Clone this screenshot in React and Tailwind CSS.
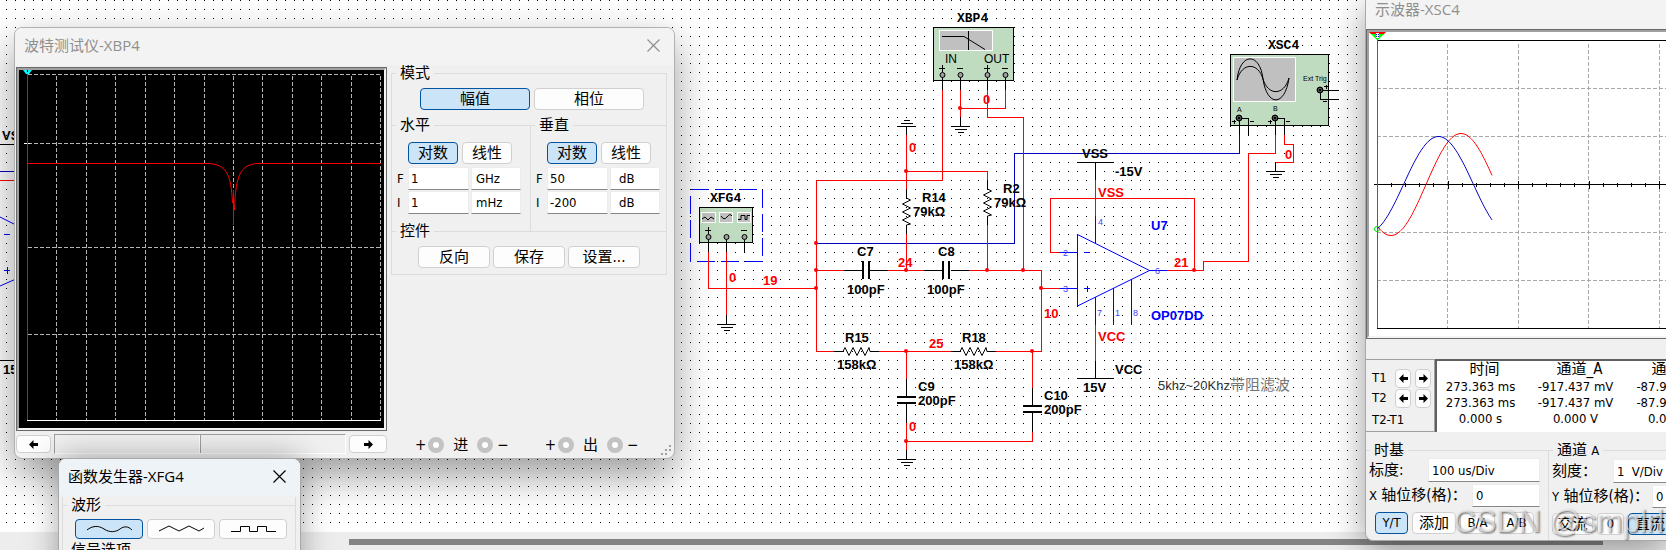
import React, { useState } from 'react';

const UI_FONT = "font-['DejaVu_Sans_Condensed','Noto_Sans','Noto_Sans_CJK_SC',sans-serif]";
const TITLE_FONT = "font-['Open_Sans','Noto_Sans_CJK_SC',sans-serif]";

const RED = '#ff0000';
const BLUE = '#0000ff';
const NAVY = '#0000c0';
const BLACK = '#000000';

/* ---------- shared controls ---------- */

function Btn({ active, className = '', children, ...rest }) {
  const look = active
    ? 'border-[#00549f] bg-[#cce4f7]'
    : 'border-[#d0d0d0] bg-[#fdfdfd]';
  return (
    <button
      type="button"
      className={`flex shrink-0 items-center justify-center rounded border text-black ${look} ${className}`}
      {...rest}
    >
      {children}
    </button>
  );
}

function Field({ className = '', ...rest }) {
  return (
    <input
      type="text"
      className={`min-w-0 shrink-0 border border-[#ececec] border-b-[#868686] bg-white text-[13px] text-black outline-none ${className}`}
      {...rest}
    />
  );
}

function Group({ legend, className = '', children }) {
  return (
    <fieldset className={`min-w-0 border-t border-[#dcdcdc] ${className}`}>
      <legend className="ml-1 px-1 text-[15px] leading-4">{legend}</legend>
      {children}
    </fieldset>
  );
}

function ArrowIcon({ right }) {
  return (
    <svg width="9" height="9" viewBox="0 0 9 9" aria-hidden="true">
      <path
        d={right ? 'M9 4.5 4.5 0v3H0v3h4.5v3z' : 'M0 4.5 4.5 0v3H9v3H4.5v3z'}
        fill="#000"
      />
    </svg>
  );
}

function CloseIcon() {
  return (
    <svg width="13" height="13" viewBox="0 0 13 13" aria-hidden="true">
      <path d="M.5.5l12 12M12.5.5l-12 12" stroke="currentColor" strokeWidth="1.2" />
    </svg>
  );
}

/* ---------- schematic ---------- */

function Wire({ d, c = RED, w = 1 }) {
  return <path d={d} fill="none" stroke={c} strokeWidth={w} shapeRendering="crispEdges" />;
}

function Label({ x, y, c = BLACK, children }) {
  return (
    <text x={x} y={y} fill={c} className="font-['Liberation_Sans',sans-serif] text-[13px] font-bold">
      {children}
    </text>
  );
}

function Name({ x, y, children }) {
  return (
    <text x={x} y={y} className="font-['Liberation_Mono',monospace] text-[13px] font-bold">
      {children}
    </text>
  );
}

function PinNo({ x, y, children }) {
  return (
    <text x={x} y={y} fill="#4040ff" className="font-['Liberation_Sans',sans-serif] text-[9px]">
      {children}
    </text>
  );
}

function Ground({ x, y, up }) {
  const s = up ? -1 : 1;
  return (
    <Wire
      c={BLACK}
      d={`M${x - 9} ${y}h18M${x - 6} ${y + 3 * s}h12M${x - 3} ${y + 6 * s}h6`}
    />
  );
}

function ResistorV({ x, y }) {
  return (
    <path
      d={`M${x} ${y - 9}v9l4 2-8 4 8 4-8 4 8 4-8 4 8 4-4 1v9`}
      fill="none"
      stroke="#000"
    />
  );
}

function ResistorH({ x, y }) {
  return (
    <path
      d={`M${x - 9} ${y}h9l2-4 4 8 4-8 4 8 4-8 4 8 4-8 1 4h9`}
      fill="none"
      stroke="#000"
    />
  );
}

function Pin({ x, y, cross }) {
  return (
    <g>
      <circle cx={x} cy={y} r="2.5" fill="#a0a0a0" stroke="#000" />
      {cross && <circle cx={x} cy={y} r="3" fill="none" stroke="#000" />}
      {cross && <circle cx={x} cy={y} r="1.5" fill="#000" />}
    </g>
  );
}

const NODES = [
  [960, 108], [906, 171], [816, 243], [816, 270], [816, 288], [906, 270],
  [987, 270], [1023, 270], [906, 351], [1032, 351], [1041, 288], [906, 441], [1194, 270],
];

function Schematic() {
  return (
    <svg className="block h-full w-full" aria-label="schematic">
      <defs>
        <pattern id="dots" width="9" height="9" patternUnits="userSpaceOnUse">
          <rect x="6" y="0" width="1" height="1" fill="#000" />
        </pattern>
      </defs>
      <rect width="100%" height="524" fill="url(#dots)" shapeRendering="crispEdges" />

      {/* neighbouring circuit on the left edge */}
      <Label x={2} y={140}>VSS</Label>
      <Label x={3} y={374}>15V</Label>
      <Wire c={BLACK} d="M0 144.5H16M0 360.5H16" />
      <Wire c={NAVY} d="M0 171.5H16" />
      <Wire d="M0 180.5H16" />
      <Wire c={BLUE} d="M4 234.5h6M4 270.5h6M7.5 267v7" />
      <path d="M0 217l16 8M0 286l16-7" stroke={BLUE} fill="none" />

      {/* instruments */}
      <Name x={957} y={22}>XBP4</Name>
      <rect x="933.5" y="27.5" width="80" height="53" fill="#c0dcc0" stroke="#000" />
      <rect x="939.5" y="30.5" width="53" height="20" fill="#c0c0c0" stroke="#fff" />
      <path d="M942 36.5h22l21 13M968.5 31v19" fill="none" stroke="#000" />
      <text x="945" y="63" className="font-['Liberation_Sans',sans-serif] text-[12px]">IN</text>
      <text x="984" y="63" className="font-['Liberation_Sans',sans-serif] text-[12px]">OUT</text>
      <Wire c={BLACK} d="M939 68.5h6M942.5 65v7M957 68.5h6M984 68.5h6M987.5 65v7M1002 68.5h6" />
      <Wire c={BLACK} d="M942.5 75v15M960.5 75v15M987.5 75v15M1005.5 75v15" />
      <Pin x={942.5} y={75} />
      <Pin x={960.5} y={75} />
      <Pin x={987.5} y={75} />
      <Pin x={1005.5} y={75} />

      <rect
        x="690.5" y="189.5" width="72" height="72"
        fill="none" stroke={BLUE} strokeDasharray="18 6" shapeRendering="crispEdges"
      />
      <Name x={710} y={202}>XFG4</Name>
      <rect x="699.5" y="207.5" width="53" height="35" fill="#c0dcc0" stroke="#000" />
      <g fill="#c0c0c0" stroke="#fff">
        <rect x="701.5" y="212.5" width="14" height="10" />
        <rect x="719.5" y="212.5" width="13" height="10" />
        <rect x="737.5" y="212.5" width="13" height="10" />
      </g>
      <path
        d="M702 219l3-2 3 3 3-3 3 2M721 216q3 5 6 1t5-1M738 219.5h3v-4h4v4h2v-4h3"
        fill="none" stroke="#000"
      />
      <Wire c={BLACK} d="M705 230.5h6M708.5 227v7M741 230.5h6" />
      <Wire c={BLACK} d="M708.5 237v15M726.5 237v15M744.5 237v15" />
      <Pin x={708.5} y={237} />
      <Pin x={726.5} y={237} />
      <Pin x={744.5} y={237} />

      <Name x={1268} y={49}>XSC4</Name>
      <rect x="1230.5" y="54.5" width="98" height="71" fill="#c0dcc0" stroke="#000" />
      <rect x="1233.5" y="57.5" width="62" height="44" fill="#c0c0c0" stroke="#fff" />
      <path
        d="M1237 80C1240 52 1260 52 1263 79C1267 107 1285 107 1289 78M1237 80C1242 62 1258 62 1263 79C1268 96 1284 96 1289 78"
        fill="none" stroke="#000"
      />
      <g className="font-['Liberation_Sans',sans-serif] text-[7px]">
        <text x="1303" y="81">Ext Trig</text>
        <text x="1237" y="112">A</text>
        <text x="1273" y="111">B</text>
      </g>
      <Wire c={BLACK} d="M1320.5 90.5H1339M1320.5 90v9.5H1339M1324 86.5h4M1326.5 85v4M1323 101.5h4" />
      <Wire c={BLACK} d="M1239.5 118v17M1239 118.5h9.5V135M1275.5 118v17M1275 118.5h9.5V135" />
      <Wire c={BLACK} d="M1232 121.5h4M1234.5 120v4M1250 121.5h4M1268 121.5h4M1270.5 120v4M1286 121.5h4" />
      <Pin x={1320} y={90} cross />
      <Pin x={1239} y={118} cross />
      <Pin x={1275} y={118} cross />

      {/* op amp */}
      <path d="M1077.5 234.5L1149.5 270.5L1077.5 306z" fill="none" stroke={BLUE} />
      <Wire c={BLUE} d="M1059 252.5h18M1059 288.5h18M1149 270.5h18M1095.5 216v27M1095.5 297v28M1113.5 288v37M1131.5 279v46" />
      <Wire c={BLUE} d="M1084 252.5h6M1084 288.5h6M1087.5 286v6" />
      <PinNo x={1063} y={256}>2</PinNo>
      <PinNo x={1063} y={292}>3</PinNo>
      <PinNo x={1155} y={274}>6</PinNo>
      <PinNo x={1098} y={225}>4</PinNo>
      <PinNo x={1097} y={316}>7</PinNo>
      <PinNo x={1115} y={316}>1</PinNo>
      <PinNo x={1133} y={316}>8</PinNo>
      <Label x={1151} y={230} c={BLUE}>U7</Label>
      <Label x={1151} y={320} c={BLUE}>OP07DD</Label>

      {/* nets */}
      <Wire c={NAVY} d="M816 243.5H1014.5V153.5H1239.5V135" />
      <Wire d="M942.5 90V180.5H816.5V351.5H835" />
      <Wire d="M960.5 90V117M960 108.5H1005.5V90M987.5 90V117.5H1023.5V270" />
      <Wire d="M906.5 135V190M906 171.5H987.5V181M906.5 233V270M987.5 224V270" />
      <Wire d="M708.5 252V288.5H816M726.5 252V315" />
      <Wire d="M816 270.5H844M888 270.5H924M969 270.5H1041.5V351.5H996M1041 288.5H1060" />
      <Wire d="M879 351.5H952M906.5 351V379M906.5 423V450M906 441.5H1032.5V432M1032.5 351V388" />
      <Wire d="M1059 252.5H1050.5V198.5H1194.5V270M1167 270.5H1203.5V261.5H1248.5V153.5H1275.5V135" />
      <Wire d="M1095.5 180V216M1095.5 325V361M1284.5 135V144.5H1293.5V162.5H1275" />
      <Wire c={BLACK} d="M960.5 117V126M906.5 126V135M726.5 315V324M906.5 450V459M1275.5 162V171" />
      <Wire c={BLACK} d="M844 270.5h18M870 270.5h18M924 270.5h18M951 270.5h18" />
      <Wire c={BLACK} d="M906.5 379v18M906.5 404v19M1032.5 388v18M1032.5 413v19" />
      <Wire c={BLACK} d="M1077 162.5h37M1095.5 162v18M1077 378.5h37M1095.5 361v17" />
      <Wire c={BLACK} w={2} d="M863 261v18M869 261v18M943 261v18M949 261v18" />
      <Wire c={BLACK} w={2} d="M897 397h19M897 403h19M1023 406h19M1023 412h19" />

      <Ground x={960.5} y={126.5} />
      <Ground x={906.5} y={126.5} up />
      <Ground x={726.5} y={324.5} />
      <Ground x={906.5} y={459.5} />
      <Ground x={1275.5} y={171.5} />

      <ResistorV x={906.5} y={198} />
      <ResistorV x={987.5} y={189} />
      <ResistorH x={843} y={351.5} />
      <ResistorH x={960} y={351.5} />

      {NODES.map(([x, y]) => (
        <circle key={`${x}-${y}`} cx={x} cy={y} r="2" fill={RED} />
      ))}

      <Label x={983} y={104} c={RED}>0</Label>
      <Label x={909} y={152} c={RED}>0</Label>
      <Label x={729} y={282} c={RED}>0</Label>
      <Label x={909} y={431} c={RED}>0</Label>
      <Label x={1285} y={159} c={RED}>0</Label>
      <Label x={763} y={285} c={RED}>19</Label>
      <Label x={898} y={267} c={RED}>24</Label>
      <Label x={929} y={348} c={RED}>25</Label>
      <Label x={1044} y={318} c={RED}>10</Label>
      <Label x={1174} y={267} c={RED}>21</Label>
      <Label x={1098} y={197} c={RED}>VSS</Label>
      <Label x={1098} y={341} c={RED}>VCC</Label>

      <Label x={922} y={202}>R14</Label>
      <Label x={913} y={216}>79kΩ</Label>
      <Label x={1003} y={193}>R2</Label>
      <Label x={994} y={207}>79kΩ</Label>
      <Label x={857} y={256}>C7</Label>
      <Label x={847} y={294}>100pF</Label>
      <Label x={938} y={256}>C8</Label>
      <Label x={927} y={294}>100pF</Label>
      <Label x={845} y={342}>R15</Label>
      <Label x={837} y={369}>158kΩ</Label>
      <Label x={962} y={342}>R18</Label>
      <Label x={954} y={369}>158kΩ</Label>
      <Label x={918} y={391}>C9</Label>
      <Label x={918} y={405}>200pF</Label>
      <Label x={1044} y={400}>C10</Label>
      <Label x={1044} y={414}>200pF</Label>
      <Label x={1082} y={158}>VSS</Label>
      <Label x={1115} y={176}>-15V</Label>
      <Label x={1115} y={374}>VCC</Label>
      <Label x={1083} y={392}>15V</Label>
      <text x="1158" y="390" fill="#333" className="font-['Liberation_Sans','Noto_Sans_CJK_SC',sans-serif] text-[13px]">
        5khz~20Khz
        <tspan fill="#777" className="text-[15px]">带阻滤波</tspan>
      </text>
    </svg>
  );
}

/* ---------- bode plotter ---------- */

const BODE_X = [56.5, 86.5, 115.5, 145.5, 174.5, 204.5, 233.5, 262.5, 292.5, 321.5, 351.5, 380.5];
const BODE_Y = [74.5, 143.5, 247.5, 334.5];

function BodePlot() {
  return (
    <svg viewBox="19 70 365 358" className="block h-[358px] w-full bg-black" aria-label="bode plot">
      <g stroke="#b4b4b4" strokeDasharray="4 2" shapeRendering="crispEdges">
        {BODE_X.map((x) => <path key={x} d={`M${x} 76V420`} />)}
        {BODE_Y.map((y) => <path key={y} d={`M28 ${y}H381`} />)}
      </g>
      <path d="M27 420.5H381M24 143.5h6" stroke="#fff" shapeRendering="crispEdges" />
      <path d="M27.5 74V420M27 163.5H209M257 163.5H381" stroke={RED} shapeRendering="crispEdges" />
      <path
        d="M209 163.5C226 165 231 173 232.5 203M233.5 190V225M234.5 210C235.5 174 241 165 257 163.5"
        fill="none" stroke={RED}
      />
      <path d="M23 70h9l-3 4h-3z" fill="#00ffff" />
      <path d="M27 70h1v2h-1z" fill="#000" />
    </svg>
  );
}

function AxisRow({ tag, value, unit, unitPad = 'pl-1' }) {
  return (
    <div className="flex h-6 items-start">
      <span className="w-[11px] shrink-0 pt-1 text-[13px] leading-4">{tag}</span>
      <Field aria-label={tag} defaultValue={value} className="mr-0.5 h-[23px] w-[61px] pl-0.5" />
      <Field aria-label={`${tag} unit`} defaultValue={unit} className={`h-[23px] w-[50px] ${unitPad}`} />
    </div>
  );
}

function AxisGroup({ legend, rows, className, unitPad }) {
  const [mode, setMode] = useState('log');
  return (
    <Group legend={legend} className={`pb-4 ${className}`}>
      <div className="mb-[3px] flex gap-1 pt-[9px] pl-4 text-[15px]">
        <Btn active={mode === 'log'} onClick={() => setMode('log')} className="h-[22px] w-[50px]">对数</Btn>
        <Btn active={mode === 'lin'} onClick={() => setMode('lin')} className="h-[22px] w-[50px]">线性</Btn>
      </div>
      <div className="pl-[5px]">
        {rows.map((r) => <AxisRow key={r.tag} {...r} unitPad={unitPad} />)}
      </div>
    </Group>
  );
}

function Terminal() {
  return <span className="size-4 shrink-0 rounded-full border-[5px] border-[#c3c3c3] bg-white" />;
}

function TerminalPair({ name }) {
  return (
    <div className="flex items-center text-[15px] leading-4">
      <span className="mr-0.5">+</span>
      <Terminal />
      <span className="mx-[9px]">{name}</span>
      <Terminal />
      <span className="ml-1">−</span>
    </div>
  );
}

function BodeWindow() {
  const [view, setView] = useState('mag');
  return (
    <section className={`absolute top-[27px] left-[14px] w-[661px] overflow-hidden rounded-lg border border-[#b0b0b0] bg-[#f0f0f0] shadow-[0_16px_40px_rgba(0,0,0,0.4)] ${UI_FONT}`}>
      <header className={`flex h-[37px] items-center justify-between bg-[#f3f3f3] pr-3.5 pb-0.5 pl-[9px] text-[#8f8f8f] ${TITLE_FONT}`}>
        <h2 className="text-[15px]">波特测试仪-XBP4</h2>
        <button type="button" aria-label="close"><CloseIcon /></button>
      </header>

      <div className="flex pt-0.5 pl-px">
        <div className="w-[371px] shrink-0">
          <div className="border border-[#696969]">
            <div className="border-2 border-[#a0a0a0] border-r-[#f4f4f4] border-b-[#f4f4f4]">
              <BodePlot />
            </div>
          </div>
          <div className="flex items-center gap-[3px] pt-[3px] pb-1">
            <Btn aria-label="left" className="h-[18px] w-[35px]"><ArrowIcon /></Btn>
            <div className="flex h-5 flex-1 border border-[#a0a0a0] border-r-white border-b-white">
              <div className="flex-1 border-r border-white" />
              <div className="flex-1 border-l border-[#a0a0a0]" />
            </div>
            <Btn aria-label="right" className="h-[18px] w-[38px]"><ArrowIcon right /></Btn>
          </div>
        </div>

        <div className="flex min-w-0 flex-1 flex-col pr-[7px] pl-1">
          <div className="mt-1.5 border-x border-b border-[#dcdcdc]">
            <Group legend="模式" className="-mt-2">
              <div className="flex justify-center gap-1 py-[7px] pl-1.5 text-[15px]">
                <Btn active={view === 'mag'} onClick={() => setView('mag')} className="h-[22px] w-[110px]">幅值</Btn>
                <Btn active={view === 'phase'} onClick={() => setView('phase')} className="h-[22px] w-[110px]">相位</Btn>
              </div>
            </Group>
            <div className="-mb-2 flex">
              <AxisGroup
                legend="水平"
                className="w-[139px] border-r"
                rows={[{ tag: 'F', value: '1', unit: 'GHz' }, { tag: 'I', value: '1', unit: 'mHz' }]}
              />
              <AxisGroup
                legend="垂直"
                className="flex-1"
                unitPad="pl-2"
                rows={[{ tag: 'F', value: '50', unit: 'dB' }, { tag: 'I', value: '-200', unit: 'dB' }]}
              />
            </div>
            <Group legend="控件">
              <div className="flex gap-[3px] pt-[7px] pb-1.5 pl-[26px] text-[15px]">
                <Btn className="h-[22px] w-[72px]">反向</Btn>
                <Btn className="h-[22px] w-[72px]">保存</Btn>
                <Btn className="h-[22px] w-[72px]">设置...</Btn>
              </div>
            </Group>
          </div>

          <div className="mt-auto mb-[5px] flex gap-9 pl-6">
            <TerminalPair name="进" />
            <TerminalPair name="出" />
          </div>
        </div>
      </div>

      <svg className="absolute right-0.5 bottom-0.5" width="11" height="11" aria-hidden="true">
        <path d="M8 0h2v2h-2zM4 4h2v2h-2zM8 4h2v2h-2zM0 8h2v2h-2zM4 8h2v2h-2z" fill="#a0a0a0" />
      </svg>
    </section>
  );
}

/* ---------- function generator ---------- */

const WAVES = [
  { id: 'sine', d: 'M0 9C5 5 11 4 17 8S29 11 33 8S41 5 45 9' },
  { id: 'triangle', d: 'M0 10l10-5 10 5 10-5 10 5 5-3' },
  { id: 'square', d: 'M0 10.5h9.5v-5h9v5h8v-5h9v5H45' },
];

function GeneratorWindow() {
  const [wave, setWave] = useState('sine');
  return (
    <section className={`absolute top-[458px] left-[58px] w-[243px] overflow-hidden rounded-t-lg border border-[#a8a8a8] bg-[#f0f0f0] shadow-[0_0_32px_rgba(0,0,0,0.35)] ${UI_FONT}`}>
      <header className={`flex h-[36px] items-center justify-between bg-[#eef3f8] pr-3.5 pb-0.5 pl-[9px] ${TITLE_FONT}`}>
        <h2 className="text-[15px]">函数发生器-XFG4</h2>
        <button type="button" aria-label="close"><CloseIcon /></button>
      </header>
      <div className="mr-1 ml-[3px] mt-2.5 border-x border-[#dcdcdc]">
        <Group legend="波形" className="-mt-2">
          <div className="flex gap-1 pt-1.5 pb-[3px] pl-3">
            {WAVES.map((w) => (
              <Btn
                key={w.id}
                aria-label={w.id}
                active={wave === w.id}
                onClick={() => setWave(w.id)}
                className="h-5 w-[68px]"
              >
                <svg width="45" height="16" viewBox="0 0 45 16" fill="none" stroke="#000">
                  <path d={w.d} />
                </svg>
              </Btn>
            ))}
          </div>
        </Group>
        <Group legend="信号选项">
          <div className="h-10" />
        </Group>
      </div>
    </section>
  );
}

/* ---------- oscilloscope ---------- */

function sinePath(x0, x1, zero, amp, period) {
  let d = '';
  for (let x = x0; x <= x1; x += 1) {
    const y = 184.5 - amp * Math.sin((2 * Math.PI * (x - zero)) / period);
    d += `${d ? 'L' : 'M'}${x} ${y.toFixed(1)}`;
  }
  return d;
}

const TICKS = Array.from({ length: 24 }, (_, i) => i + 1);

function ScopePlot() {
  return (
    <svg className="block h-[304px] w-full bg-white" aria-label="scope trace">
      <g transform="translate(-1369 -32)" fill="none">
        <g stroke="#a8a8a8" strokeDasharray="4 2" shapeRendering="crispEdges">
          <path d="M1447.5 44V328M1518.5 44V328M1588.5 44V328M1659.5 44V328" />
          <path d="M1377 88.5H2000M1377 136.5H2000M1377 232.5H2000M1377 280.5H2000" />
        </g>
        <g stroke="#000" shapeRendering="crispEdges">
          <path d="M1377 40.5H2000M1377 328.5H2000M1374 184.5H2000" />
          {TICKS.map((i) => {
            const x = Math.round(1377 + i * 14.1) + 0.5;
            return <path key={i} d={i % 5 ? `M${x} 183v4` : `M${x} 181v8`} />;
          })}
        </g>
        <path d="M1377.5 40V328" stroke="#e000e0" shapeRendering="crispEdges" />
        <circle cx="1377" cy="229" r="2.5" stroke="#00e000" />
        <path d={sinePath(1378, 1492, 1426, 51, 140)} stroke={RED} />
        <path d={sinePath(1378, 1492, 1403.5, 48, 140)} stroke={NAVY} />
        <path d="M1369 32h17l-8 8h-1z" fill="#00ff00" />
        <path d="M1369 32h17l-2 2h-13z" fill="#ff0000" />
        <path d="M1376 33h3v5h-3z" fill="#fff" />
        <path d="M1376.5 34v4M1378.5 34v4" stroke={NAVY} strokeDasharray="1 1" />
      </g>
    </svg>
  );
}

const READOUT = [
  ['273.363 ms', '-917.437 mV', '-87.912 mV'],
  ['273.363 ms', '-917.437 mV', '-87.912 mV'],
  ['0.000 s', '0.000 V', '0.000 V'],
];

function CursorRow({ name }) {
  return (
    <div className="flex h-5 items-center gap-1">
      <span className="w-[19px]">{name}</span>
      <Btn aria-label={`${name} left`} className="h-[19px] w-4"><ArrowIcon /></Btn>
      <Btn aria-label={`${name} right`} className="h-[19px] w-4"><ArrowIcon right /></Btn>
    </div>
  );
}

function ScopeWindow() {
  return (
    <section className={`absolute top-0 right-0 left-[1365px] overflow-hidden rounded-bl-lg border-b border-l border-[#a8a8a8] bg-[#f0f0f0] shadow-[0_8px_36px_rgba(0,0,0,0.4)] ${UI_FONT}`}>
      <header className={`h-[29px] bg-[#f3f3f3] pl-[9px] text-[#8f8f8f] ${TITLE_FONT}`}>
        <h2 className="text-[15px] leading-[18px]">示波器-XSC4</h2>
      </header>

      <div className="border-y border-l border-[#696969]">
        <div className="border-y-2 border-l-2 border-[#a0a0a0] border-b-[#f4f4f4]">
          <ScopePlot />
        </div>
      </div>

      <div className="mt-5 flex h-[73px]">
        <div className="w-[69px] shrink-0 border border-l-0 border-[#a0a0a0] pt-2 pl-1.5 text-[13px] leading-4">
          <CursorRow name="T1" />
          <CursorRow name="T2" />
          <div className="pt-1">T2-T1</div>
        </div>
        <div className="flex-1 overflow-hidden border-t-2 border-l-2 border-[#606060] bg-white">
          <table className="w-[285px] table-fixed text-center text-[13px] leading-4">
            <thead>
              <tr className="h-[18px] text-[15px]">
                <th className="p-0 pb-0.5 font-normal">时间</th>
                <th className="p-0 pb-0.5 font-normal">通道_A</th>
                <th className="p-0 pb-0.5 font-normal">通道_B</th>
              </tr>
            </thead>
            <tbody>
              {READOUT.map((row, i) => (
                <tr key={i}>
                  {row.map((v, j) => <td key={j} className="p-0 pr-2 whitespace-nowrap">{v}</td>)}
                </tr>
              ))}
            </tbody>
          </table>
        </div>
      </div>

      <div className="mt-2.5 flex">
        <Group legend="时基" className="w-[183px] shrink-0 border-r pb-[5px]">
          <label className="mb-0.5 flex h-6 items-center justify-between pr-2 pl-[3px] text-[15px]">
            标度:
            <Field defaultValue="100 us/Div" className="h-6 w-[112px] pl-[3px]" />
          </label>
          <label className="flex h-[23px] items-center justify-between pr-2 pl-[3px] text-[15px] whitespace-nowrap">
            <span><span className="text-[13px]">X</span> 轴位移(格)：</span>
            <Field defaultValue="0" className="h-[23px] w-[68px] pl-[3px]" />
          </label>
          <div className="flex gap-1 pt-[5px] pl-[9px] text-[13px]">
            <Btn active className="h-[22px] w-[33px]">Y/T</Btn>
            <Btn className="h-[22px] w-[44px] text-[15px]">添加</Btn>
            <Btn className="h-[22px] w-[35px]">B/A</Btn>
            <Btn className="h-[22px] w-[35px]">A/B</Btn>
          </div>
        </Group>
        <Group legend={<>通道 <span className="text-[13px]">A</span></>} className="w-[182px] shrink-0 pb-[5px]">
          <label className="mb-0.5 flex h-6 items-center justify-between pl-[3px] text-[15px]">
            刻度：
            <Field defaultValue="1  V/Div" className="h-6 w-[118px] pl-[3px]" />
          </label>
          <label className="flex h-[23px] items-center justify-between pl-[3px] text-[15px] whitespace-nowrap">
            <span><span className="text-[13px]">Y</span> 轴位移(格)：</span>
            <Field defaultValue="0" className="h-[23px] w-[79px] pl-[3px]" />
          </label>
          <div className="flex gap-1 pt-[5px] pl-[3px] text-[15px]">
            <Btn className="h-[22px] w-[41px]">交流</Btn>
            <Btn className="h-[22px] w-[27px] text-[13px]">0</Btn>
            <Btn active className="h-[22px] w-[44px]">直流</Btn>
          </div>
        </Group>
      </div>
    </section>
  );
}

export default function App() {
  return (
    <div className="relative flex h-screen flex-col overflow-hidden bg-white text-black">
      <main className="min-h-0 flex-1">
        <Schematic />
      </main>
      <div className="h-[18px] shrink-0 bg-[#ededed] pt-[7px] pr-[63px] pl-[349px]">
        <div className="h-1.5 bg-[#848484]" />
      </div>

      <BodeWindow />
      <GeneratorWindow />
      <ScopeWindow />

      <div className="pointer-events-none absolute right-0.5 bottom-3 font-['Liberation_Sans',sans-serif] text-[31px] leading-8 whitespace-nowrap text-white/60 [text-shadow:1px_1px_2px_rgba(0,0,0,0.55)]">
        CSDN @smplrl
      </div>
    </div>
  );
}
